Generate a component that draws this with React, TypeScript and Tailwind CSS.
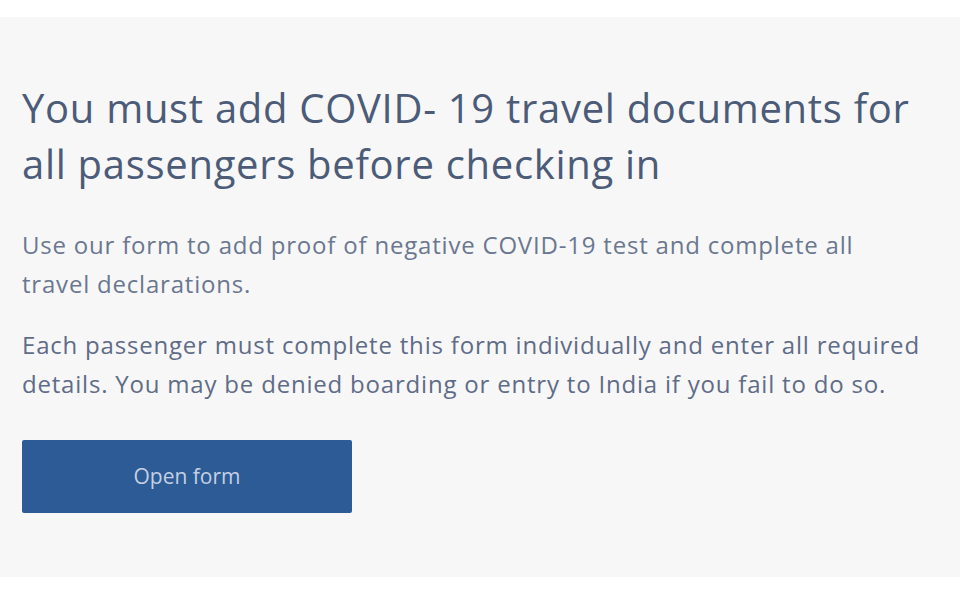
export default function App() {
  return (
    <div className="min-h-[605px] w-[960px] bg-white pt-[17px] font-['Open_Sans',sans-serif]">
      <section className="h-[560px] bg-[#f7f7f7] px-[22px] pt-[63px]">
        <h2 className="max-w-[920px] text-[40px] leading-[56px] tracking-[0.7px] text-[#4b5b78]">
          You must add COVID- 19 travel documents for all passengers before checking in
        </h2>
        <p className="mt-[33px] max-w-[870px] text-[24px] leading-[39px] tracking-[0.8px] text-[#6b7790]">
          Use our form to add proof of negative COVID-19 test and complete all travel declarations.
        </p>
        <p className="mt-[22px] max-w-[912px] text-[24px] leading-[39px] tracking-[0.8px] text-[#5f6c88]">
          Each passenger must complete this form individually and enter all required details. You may be denied boarding or entry to India if you fail to do so.
        </p>
        <button className="mt-[37px] flex h-[73px] w-[330px] items-center justify-center rounded-[2px] bg-[#2d5b96] text-[21px] text-[#c4d0e3]">
          Open form
        </button>
      </section>
    </div>
  );
}
